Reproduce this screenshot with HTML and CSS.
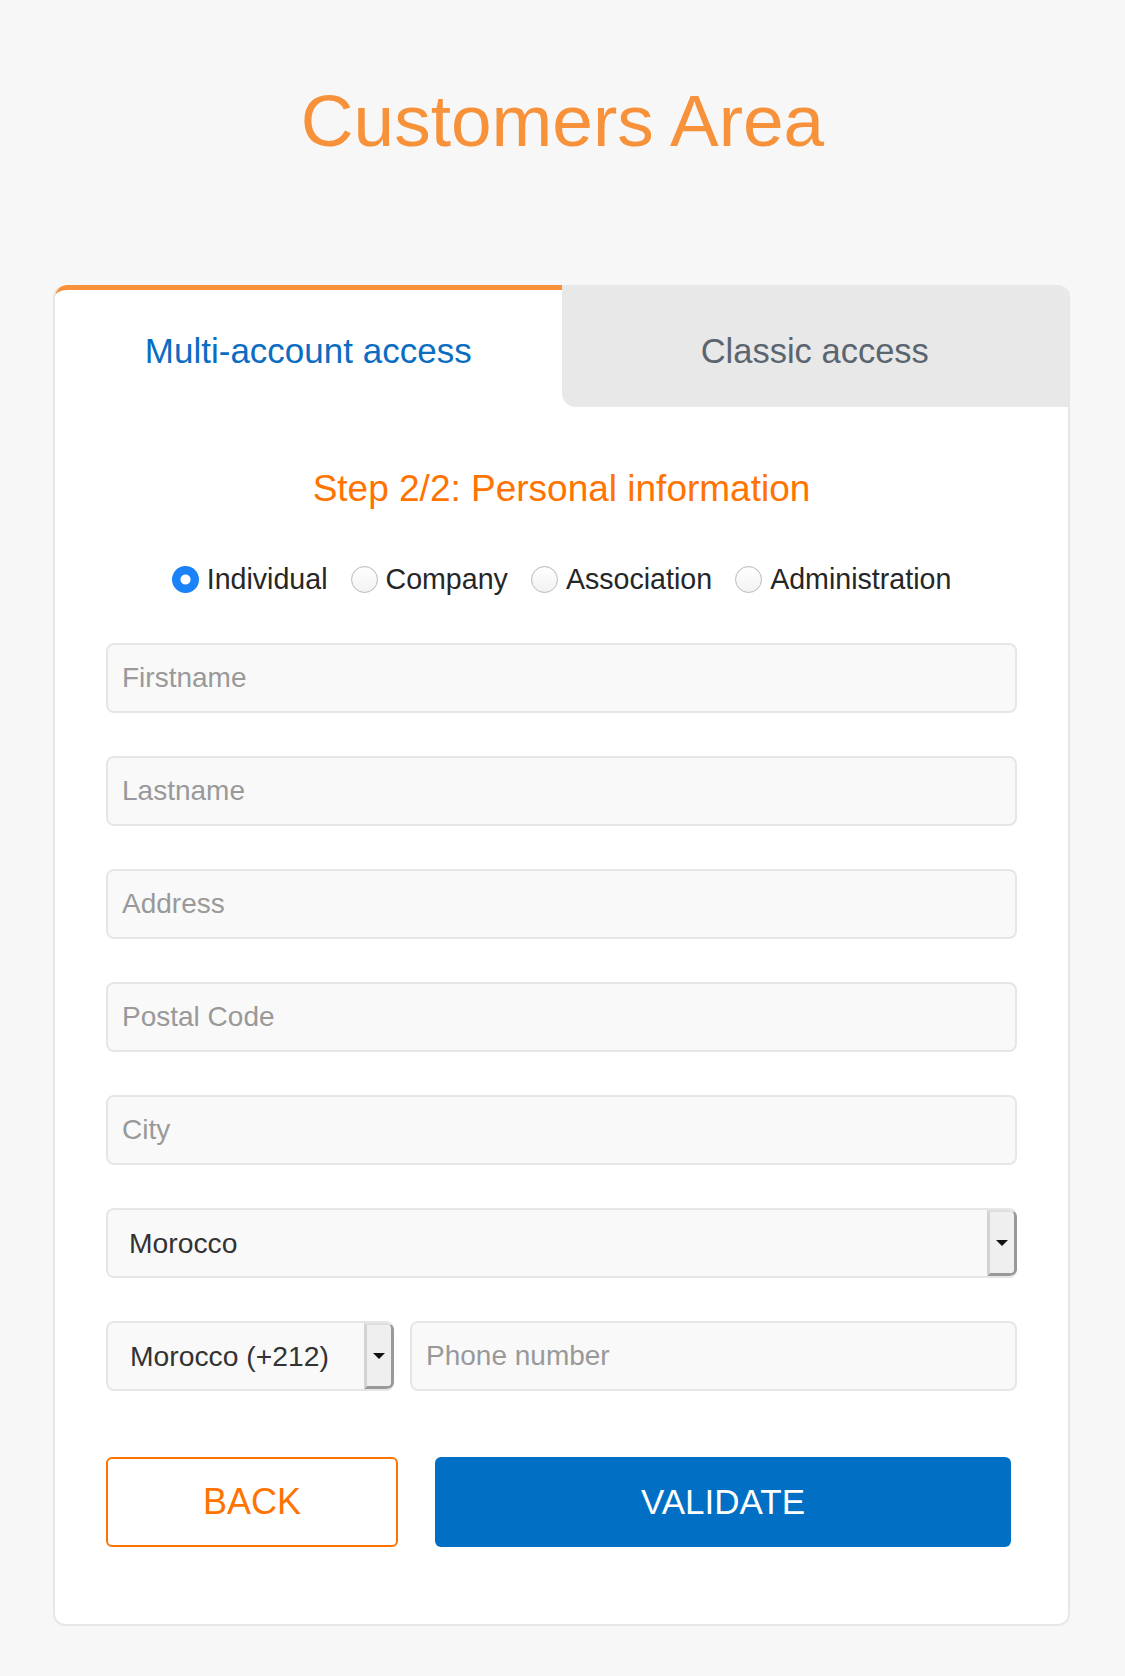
FILE: index.html
```html
<!DOCTYPE html>
<html lang="en">
<head>
<meta charset="utf-8">
<title>Customers Area</title>
<link rel="stylesheet" href="styles.css">
</head>
<body>
  <h1 class="title">Customers Area</h1>
  <main class="card">
    <nav class="tabs">
      <a class="tab tab-active" href="#">Multi-account access</a>
      <a class="tab tab-inactive" href="#">Classic access</a>
    </nav>
    <form class="card-body">
      <h2 class="step">Step 2/2: Personal information</h2>
      <div class="types">
        <label class="type"><input type="radio" name="type" checked><span>Individual</span></label>
        <label class="type"><input type="radio" name="type"><span>Company</span></label>
        <label class="type"><input type="radio" name="type"><span>Association</span></label>
        <label class="type"><input type="radio" name="type"><span>Administration</span></label>
      </div>
      <div class="fields">
        <input class="field" type="text" placeholder="Firstname">
        <input class="field" type="text" placeholder="Lastname">
        <input class="field" type="text" placeholder="Address">
        <input class="field" type="text" placeholder="Postal Code">
        <input class="field" type="text" placeholder="City">
        <div class="select">
          <select class="select-input"><option>Morocco</option></select>
          <span class="select-btn"><span class="caret"></span></span>
        </div>
        <div class="phone-row">
          <div class="select select-phone">
            <select class="select-input"><option>Morocco (+212)</option></select>
            <span class="select-btn"><span class="caret"></span></span>
          </div>
          <input class="field field-phone" type="tel" placeholder="Phone number">
        </div>
      </div>
      <div class="actions">
        <button class="btn btn-back" type="button">BACK</button>
        <button class="btn btn-validate" type="submit">VALIDATE</button>
      </div>
    </form>
  </main>
</body>
</html>
```
FILE: styles.css
```css
* {
  box-sizing: border-box;
}

html, body {
  margin: 0;
  background: #f7f7f7;
}

body {
  padding: 71px 0 50px;
  font-family: "Liberation Sans", Arial, Helvetica, sans-serif;
}

.title {
  margin: 0 0 114px;
  font-size: 73px;
  line-height: 100px;
  font-weight: normal;
  text-align: center;
  color: #f7913a;
}

.card {
  width: 1017px;
  margin: 0 0 0 53px;
  background: #fff;
  border: 2px solid #e7e7e7;
  border-top: 0;
  border-radius: 12px;
  overflow: hidden;
}

.tabs {
  display: grid;
  grid-template-columns: 1fr 1fr;
}

.tab {
  display: block;
  height: 122px;
  font-size: 35px;
  line-height: 40px;
  text-align: center;
  text-decoration: none;
}

.tab-active {
  border-top: 5px solid #f7913a;
  border-top-left-radius: 12px;
  padding-top: 41px;
  color: #0a6dc2;
  background: #fff;
}

.tab-inactive {
  padding-top: 46px;
  font-size: 34.5px;
  color: #5a6570;
  background: #e8e8e8;
  border-bottom-left-radius: 14px;
}

.card-body {
  padding: 60px 51px 77px;
  margin: 0;
}

.step {
  margin: 0;
  font-size: 37px;
  line-height: 44px;
  font-weight: normal;
  text-align: center;
  color: #ff7300;
}

.types {
  margin-top: 51px;
  display: flex;
  justify-content: center;
  gap: 23px;
  font-size: 28.6px;
  line-height: 34px;
  color: #262626;
}

.type {
  display: flex;
  align-items: center;
  gap: 8px;
}

.type input {
  -webkit-appearance: none;
  appearance: none;
  margin: 0;
  width: 27px;
  height: 27px;
  border-radius: 50%;
  border: 1px solid #b9b9b9;
  background: linear-gradient(#ffffff, #f2f2f2);
  box-shadow: inset 0 1px 1px rgba(0, 0, 0, 0.04);
}

.type input:checked {
  border: 0;
  background: radial-gradient(circle, #ffffff 0 4.5px, #1a83f9 5.5px);
}

.fields {
  margin-top: 47px;
  display: flex;
  flex-direction: column;
  gap: 43px;
}

.field {
  display: block;
  width: 100%;
  height: 70px;
  margin: 0;
  padding: 0 14px;
  border: 2px solid #e6e6e6;
  border-radius: 8px;
  background: #f9f9f9;
  font-family: "Liberation Sans", Arial, Helvetica, sans-serif;
  font-size: 28px;
  color: #333;
  outline: none;
}

.field::placeholder {
  color: #999;
}

.select {
  display: flex;
  height: 70px;
  border: 2px solid #e6e6e6;
  border-right: 0;
  border-radius: 8px;
  background: #f9f9f9;
  overflow: hidden;
}

.select-input {
  flex: 1;
  min-width: 0;
  -webkit-appearance: none;
  appearance: none;
  margin: 0;
  padding: 0 0 0 21px;
  border: 0;
  background: transparent;
  font-family: "Liberation Sans", Arial, Helvetica, sans-serif;
  font-size: 28.3px;
  color: #333;
  outline: none;
}

.select-btn {
  flex: 0 0 30px;
  display: flex;
  align-items: center;
  justify-content: center;
  background: #efefef;
  border-left: 3px solid #d3d3d3;
  border-top: 2px solid #dedede;
  border-right: 3px solid #999;
  border-bottom: 3px solid #999;
  border-radius: 0 6px 6px 0;
}

.caret {
  width: 0;
  height: 0;
  border-left: 6px solid transparent;
  border-right: 6px solid transparent;
  border-top: 6px solid #111;
}

.phone-row {
  display: flex;
  gap: 16px;
}

.select-phone {
  flex: 0 0 288px;
}

.select-phone .select-input {
  padding-left: 22px;
}

.field-phone {
  flex: 1;
  width: auto;
}

.actions {
  margin-top: 66px;
  display: flex;
  gap: 37px;
}

.btn {
  height: 90px;
  margin: 0;
  border-radius: 6px;
  font-family: "Liberation Sans", Arial, Helvetica, sans-serif;
  font-size: 35px;
  cursor: pointer;
}

.btn-back {
  width: 292px;
  border: 2px solid #ff7300;
  background: #fff;
  color: #ff7300;
  font-size: 36px;
}

.btn-validate {
  width: 576px;
  border: 0;
  background: #006fc4;
  color: #fff;
}
```
